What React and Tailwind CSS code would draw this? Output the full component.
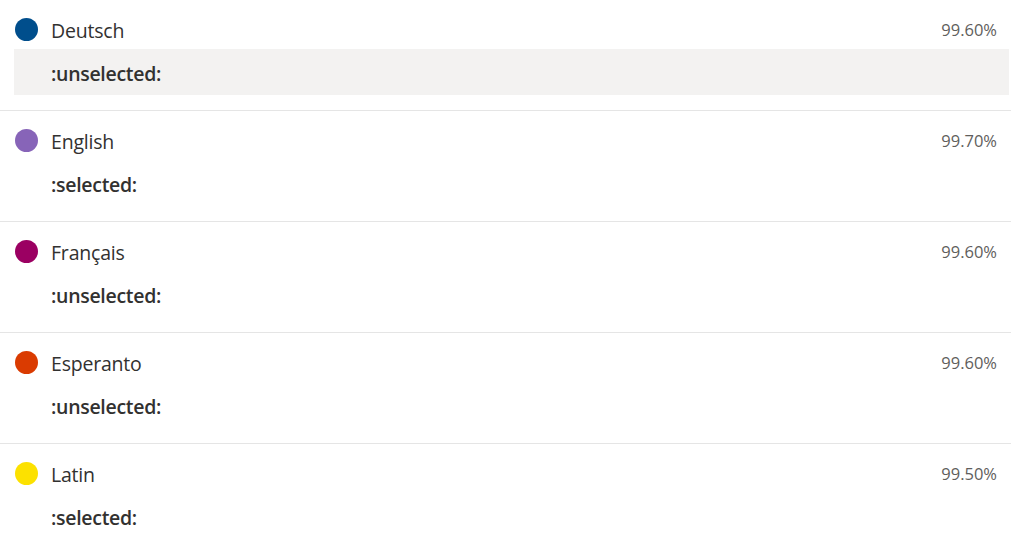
import React from "react";

const rows = [
  { name: "Deutsch", color: "bg-[#004e8c]", pct: "99.60%", status: ":unselected:", hl: true },
  { name: "English", color: "bg-[#8764b8]", pct: "99.70%", status: ":selected:" },
  { name: "Français", color: "bg-[#9b0062]", pct: "99.60%", status: ":unselected:" },
  { name: "Esperanto", color: "bg-[#da3b01]", pct: "99.60%", status: ":unselected:" },
  { name: "Latin", color: "bg-[#fce100]", pct: "99.50%", status: ":selected:" },
];

export default function App() {
  return (
    <div className="w-[1011px] h-[544px] overflow-hidden bg-white text-[#323130]" style={{ fontFamily: '"Open Sans", "Noto Sans", sans-serif' }}>
      {rows.map((r, i) => (
        <div key={i} className="border-b border-[#e5e5e5] pt-[14px] pb-[15px]">
          <div className="flex items-center h-[30px] pl-[15px] pr-[14px]">
            <div className={`w-[23px] h-[23px] rounded-full ${r.color} shrink-0`} />
            <div className="ml-[13px] text-[19.5px] leading-none pt-[4px] tracking-[-0.2px]">{r.name}</div>
            <div className="ml-auto text-[16.5px] text-[#605e5c] leading-none pt-[3px]">{r.pct}</div>
          </div>
          <div className={`mt-[5px] ml-[14px] mr-[2px] h-[46px] flex items-center pl-[37px] ${r.hl ? "bg-[#f3f2f1]" : ""}`}>
            <span className="text-[19.5px] font-semibold leading-none pt-[3px] tracking-[-0.3px]">{r.status}</span>
          </div>
        </div>
      ))}
    </div>
  );
}
